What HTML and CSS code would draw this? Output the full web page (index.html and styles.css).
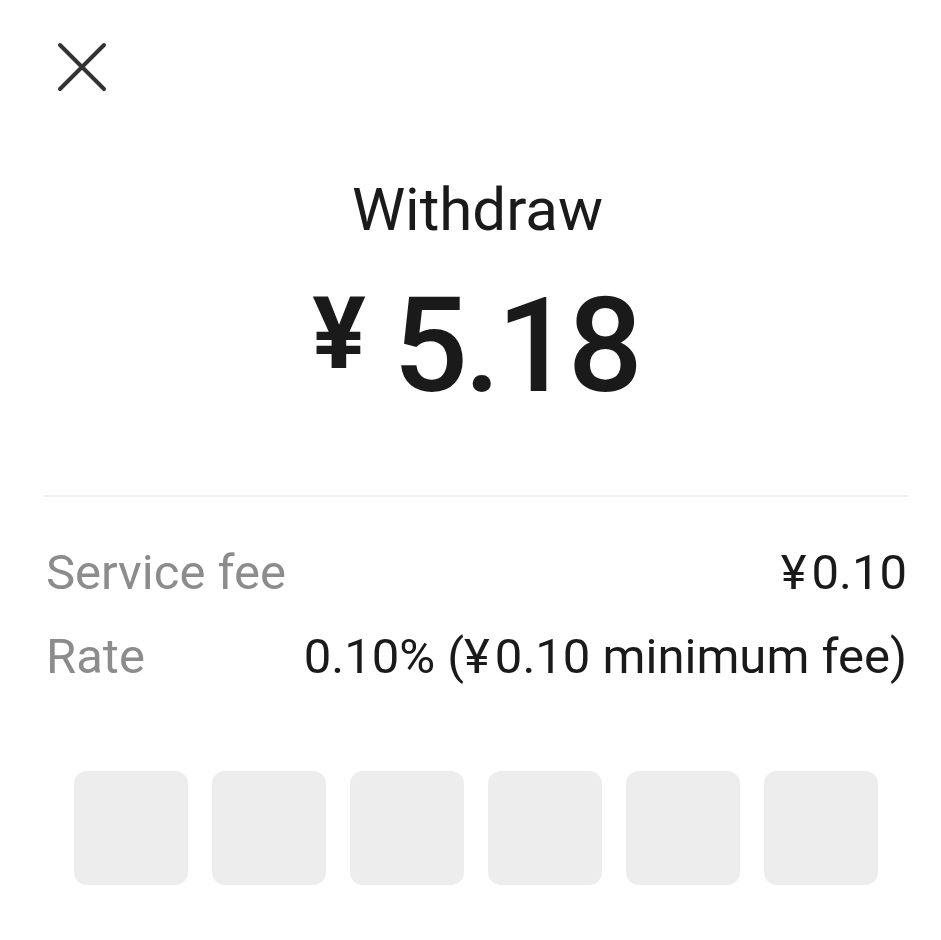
FILE: index.html
```html
<!DOCTYPE html>
<html lang="en">
<head>
    <meta charset="UTF-8">
    <meta name="viewport" content="width=device-width, initial-scale=1.0">
    <title>Withdraw</title>
    <link rel="stylesheet" href="styles.css">
</head>
<body>
    <header class="top-bar">
        <button class="close-button" aria-label="Close">
            <svg width="52" height="52" viewBox="0 0 52 52">
                <path d="M4 4 L48 48 M48 4 L4 48" stroke="#333" stroke-width="4" stroke-linecap="round" fill="none"/>
            </svg>
        </button>
    </header>

    <main>
        <h1 class="title">Withdraw</h1>
        <div class="amount">
            <span class="currency">¥</span><span class="value">5.18</span>
        </div>

        <div class="divider"></div>

        <div class="details">
            <div class="detail-row">
                <span class="label">Service fee</span>
                <span class="detail-value"><span class="yen">¥</span>0.10</span>
            </div>
            <div class="detail-row">
                <span class="label">Rate</span>
                <span class="detail-value">0.10% (<span class="yen">¥</span>0.10 minimum fee)</span>
            </div>
        </div>

        <div class="pin-boxes">
            <div class="pin-box"></div>
            <div class="pin-box"></div>
            <div class="pin-box"></div>
            <div class="pin-box"></div>
            <div class="pin-box"></div>
            <div class="pin-box"></div>
        </div>
    </main>
</body>
</html>
```

FILE: styles.css
```css
* {
    margin: 0;
    padding: 0;
    box-sizing: border-box;
}

body {
    font-family: Roboto, "Noto Sans", sans-serif;
    color: #1a1a1a;
    background-color: #fff;
    width: 941px;
    min-height: 940px;
}

.top-bar {
    padding: 41px 0 0 56px;
    height: 150px;
}

.close-button {
    display: block;
    background: none;
    border: none;
    cursor: pointer;
    line-height: 0;
}

.title {
    font-size: 60px;
    font-weight: 400;
    line-height: 60px;
    text-align: center;
    margin-top: 30px;
    padding-left: 14px;
}

.amount {
    display: flex;
    justify-content: center;
    align-items: flex-start;
    height: 100px;
    margin-top: 56px;
    padding-left: 10px;
}

.currency {
    font-size: 100px;
    font-weight: 700;
    line-height: 100px;
    margin-right: 27px;
    margin-top: -12px;
}

.value {
    font-size: 132px;
    font-weight: 500;
    line-height: 100px;
    letter-spacing: -4px;
}

.divider {
    height: 2px;
    background-color: #eeeeee;
    margin: 99px 33px 0 44px;
}

.details {
    padding: 0 34px 0 46px;
    margin-top: 34px;
}

.detail-row {
    display: flex;
    justify-content: space-between;
    align-items: baseline;
    font-size: 49px;
    line-height: 84px;
}

.label {
    color: #8c8c8c;
}

.detail-value {
    color: #1a1a1a;
}

.yen {
    margin-right: 5px;
}

.pin-boxes {
    display: flex;
    gap: 24px;
    padding-left: 74px;
    margin-top: 72px;
}

.pin-box {
    width: 114px;
    height: 114px;
    border-radius: 13px;
    background-color: #ededed;
}
```
